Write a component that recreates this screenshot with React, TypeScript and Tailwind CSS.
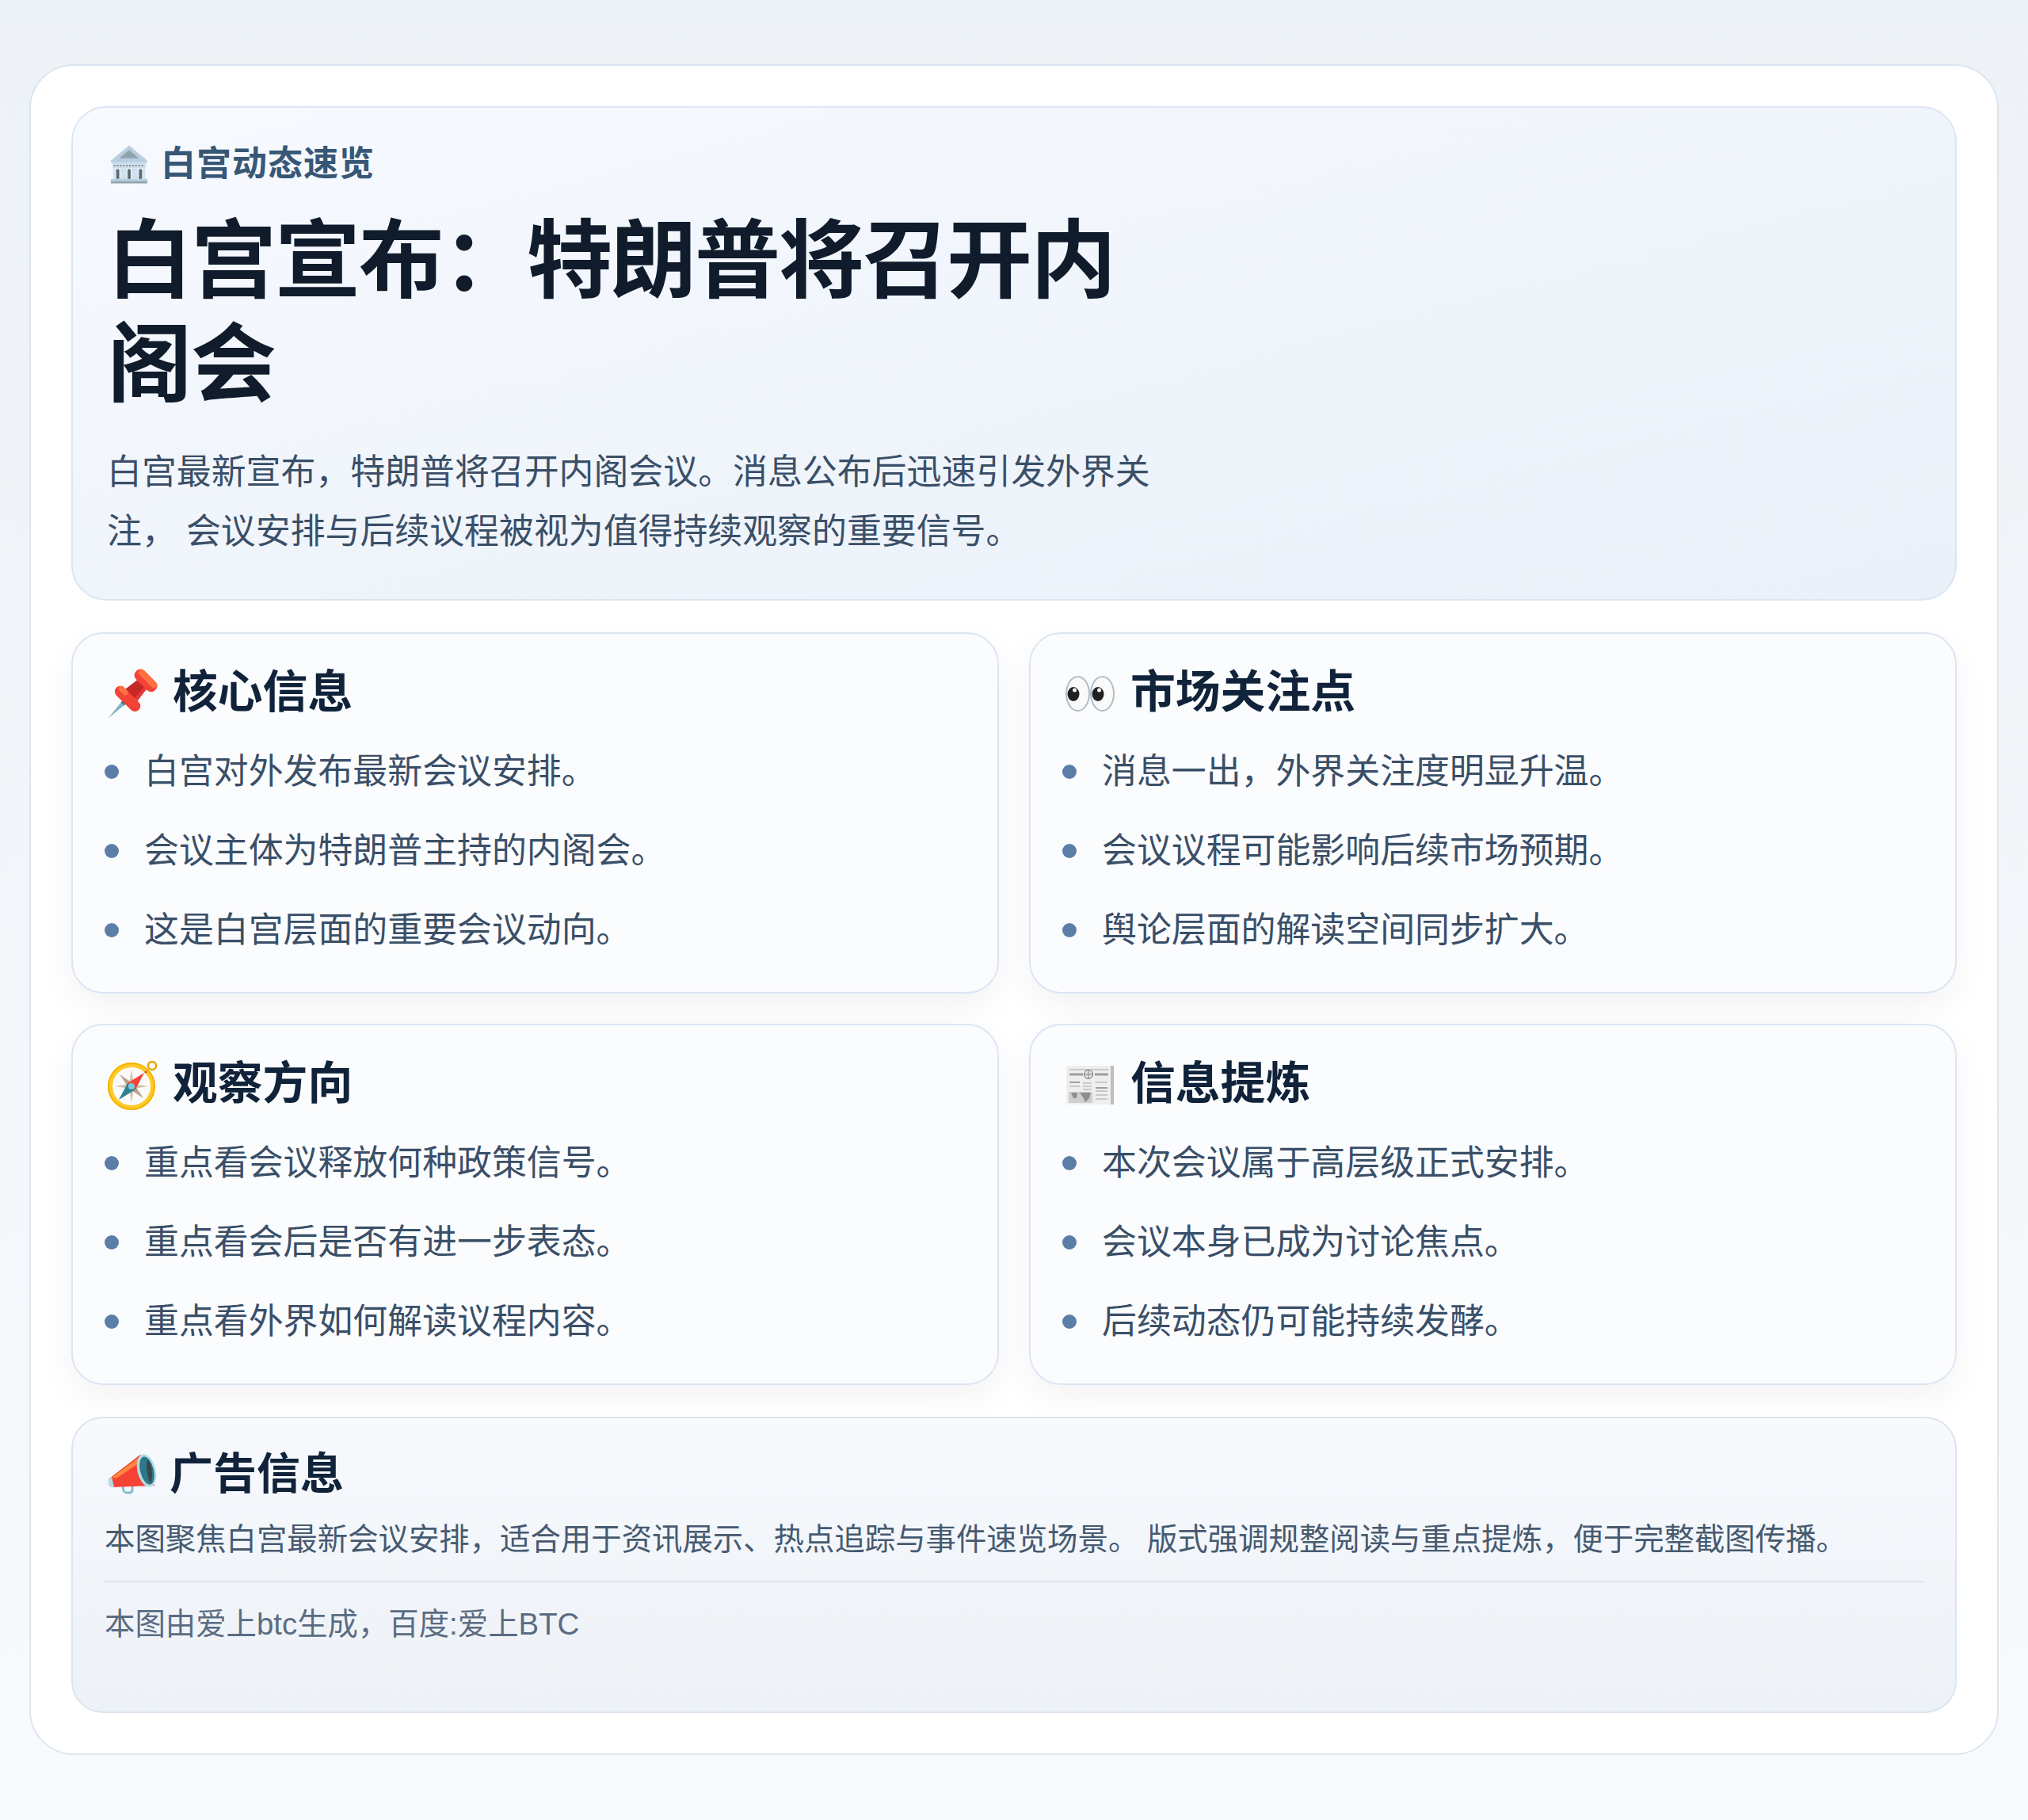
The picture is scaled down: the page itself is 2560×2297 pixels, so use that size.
const font = 'font-["Liberation_Sans","Noto_Sans_CJK_SC",sans-serif]';

function BankIcon() {
  return (
    <svg viewBox="0 0 50 50" className="ml-[4px] h-[49px] w-[48px] shrink-0">
      <path d="M25 0 L49 20 L49 23 L1 23 L1 20 Z" fill="#b9cfe0" />
      <path d="M25 6 L38 17 L12 17 Z" fill="#90a4ae" />
      <rect x="3" y="23" width="44" height="7" fill="#cfdde9" />
      <path d="M5 26.5h40" stroke="#78909c" strokeWidth="2" strokeDasharray="2 2" />
      <rect x="4" y="30" width="42" height="14" fill="#cfe0ee" />
      <rect x="6" y="30" width="8" height="14" fill="#e3ecf4" />
      <rect x="21" y="30" width="8" height="14" fill="#e3ecf4" />
      <rect x="36" y="30" width="8" height="14" fill="#e3ecf4" />
      <rect x="8" y="31" width="4" height="14" rx="2" fill="#5f6b73" />
      <rect x="23" y="31" width="4" height="14" rx="2" fill="#5f6b73" />
      <rect x="38" y="31" width="4" height="14" rx="2" fill="#5f6b73" />
      <rect x="1" y="44" width="48" height="3" fill="#b9cfe0" />
      <rect x="1" y="47" width="48" height="3" fill="#90a4ae" />
    </svg>
  );
}

function PinIcon() {
  return (
    <svg viewBox="0 0 63 63" className="h-[63px] w-[63px] shrink-0">
      <g transform="translate(47 16) rotate(45)">
        <path d="M-3 36 L3 36 L0 66 Z" fill="#84b0c1" />
        <rect x="-3" y="35" width="6" height="5" fill="#2f7889" />
        <path d="M-8 4 L8 4 L11 27 L-11 27 Z" fill="#c62828" />
        <path d="M4 4 L8 4 L11 27 L6 27 Z" fill="#e53935" />
        <rect x="-20" y="24" width="40" height="14" rx="7" fill="#f44336" />
        <rect x="-18" y="24" width="14" height="7" rx="3.5" fill="#ff7043" />
        <rect x="-17" y="-9" width="34" height="15" rx="7" fill="#f44336" />
        <rect x="-15" y="-9" width="30" height="8" rx="4" fill="#ff7043" />
      </g>
    </svg>
  );
}

function EyesIcon() {
  return (
    <svg viewBox="0 0 62 45" className="h-[45px] w-[62px] shrink-0">
      <ellipse cx="15.5" cy="22.5" rx="14.5" ry="21.5" fill="#fafafa" stroke="#b0bec5" strokeWidth="2" />
      <ellipse cx="46.5" cy="22.5" rx="14.5" ry="21.5" fill="#fafafa" stroke="#b0bec5" strokeWidth="2" />
      <ellipse cx="10" cy="23" rx="7.5" ry="9" fill="#212121" />
      <ellipse cx="41" cy="23" rx="7.5" ry="9" fill="#212121" />
      <circle cx="11.5" cy="18" r="2.5" fill="#fafafa" />
      <circle cx="42.5" cy="18" r="2.5" fill="#fafafa" />
    </svg>
  );
}

function CompassIcon() {
  return (
    <svg viewBox="0 0 62 62" className="h-[62px] w-[62px] shrink-0">
      <circle cx="56" cy="6" r="5" fill="none" stroke="#eda600" strokeWidth="2.5" />
      <circle cx="30" cy="32" r="30" fill="#ffca28" />
      <circle cx="30" cy="32" r="29" fill="none" stroke="#f4b400" strokeWidth="2" />
      <circle cx="30" cy="32" r="24" fill="#fafafa" />
      <path d="M30 11 L33 29 L51 32 L33 35 L30 53 L27 35 L9 32 L27 29Z" fill="#d7c4ae" />
      <path d="M15 17 L33 29 L45 47 L27 35Z" fill="#b8a28f" />
      <path d="M46 15 L35 36 L25 28Z" fill="#f44336" />
      <path d="M14 49 L25 28 L35 36Z" fill="#2f8296" />
      <circle cx="30" cy="32" r="4" fill="#79cbdc" />
      <circle cx="48" cy="14" r="1.6" fill="#f44336" />
    </svg>
  );
}

function NewsIcon() {
  return (
    <svg viewBox="0 0 60 49" className="h-[49px] w-[60px] shrink-0">
      <rect x="0" y="0" width="60" height="49" rx="2" fill="#eeeeee" />
      <rect x="56" y="0" width="4" height="49" fill="#bdbdbd" />
      <path d="M4 11h17M36 11h17" stroke="#9e9e9e" strokeWidth="3" />
      <path d="M4 5h49" stroke="#bdbdbd" strokeWidth="1.5" />
      <circle cx="28" cy="11" r="5.5" fill="#e0e0e0" stroke="#757575" strokeWidth="1" />
      <path d="M22.5 11h11M28 5.5v11" stroke="#757575" strokeWidth="0.8" />
      <path d="M4 21h13" stroke="#9e9e9e" strokeWidth="2" />
      <path d="M4 26h13M21 22h11M21 26h11M21 30h11M37 21h15M37 32h15M37 37h15M37 42h15" stroke="#bdbdbd" strokeWidth="1.5" />
      <path d="M37 28h15" stroke="#9e9e9e" strokeWidth="2" />
      <rect x="3" y="33" width="30" height="14" fill="#cfcfcf" />
      <path d="M6 34 L14 34 L13 41 L9 41Z M17 34 L31 34 L29 41 L24 46 L21 40Z" fill="#8f8f8f" />
    </svg>
  );
}

function MegaphoneIcon() {
  return (
    <svg viewBox="0 0 62 52" className="h-[52px] w-[62px] shrink-0">
      <path d="M19 42 L20 47 C21 51 31 51 31 47 L31 42" fill="none" stroke="#84bccb" strokeWidth="3" />
      <path d="M2 32 L41 2 L59 41 L6 43 C2 43 0 37 2 32Z" fill="#f44336" />
      <path d="M5 31 L40 5 L43 10 L12 31Z" fill="#ff8a3d" />
      <path d="M1 33 L5 30 L8 43 L5 43 C2 42 0 37 1 33Z" fill="#b2dde6" />
      <ellipse cx="49" cy="22" rx="11.5" ry="21" transform="rotate(-14 49 22)" fill="#b2dde6" />
      <ellipse cx="49.5" cy="22" rx="8.5" ry="18" transform="rotate(-14 49.5 22)" fill="#2f7889" />
      <path d="M50 8 C56 14 58 28 54 38 C51 32 47 18 50 8Z" fill="#37474f" />
    </svg>
  );
}

const cards = [
  { icon: <PinIcon />, pad: 'pl-[4px]', title: '核心信息', items: ['白宫对外发布最新会议安排。', '会议主体为特朗普主持的内阁会。', '这是白宫层面的重要会议动向。'] },
  { icon: <EyesIcon />, pad: 'pl-[4px]', title: '市场关注点', items: ['消息一出，外界关注度明显升温。', '会议议程可能影响后续市场预期。', '舆论层面的解读空间同步扩大。'] },
  { icon: <CompassIcon />, pad: 'pl-[4px]', title: '观察方向', items: ['重点看会议释放何种政策信号。', '重点看会后是否有进一步表态。', '重点看外界如何解读议程内容。'] },
  { icon: <NewsIcon />, pad: 'pl-[5px]', title: '信息提炼', items: ['本次会议属于高层级正式安排。', '会议本身已成为讨论焦点。', '后续动态仍可能持续发酵。'] },
];

function InfoCard({ icon, pad, title, items }: (typeof cards)[number]) {
  return (
    <div className="h-[456px] rounded-[40px] border-2 border-[#dce6f2] bg-[#fbfcfe] px-[40px] pt-[40px] shadow-[0_16px_44px_rgba(15,23,42,0.05)]">
      <h2 className="flex h-[68px] items-center text-[56.8px] font-bold leading-[68px] text-[#10233a]">
        <span className={`mt-[3px] flex w-[86px] shrink-0 ${pad}`}>{icon}</span>
        <span>{title}</span>
      </h2>
      <ul className="mt-[16px] flex flex-col">
        {items.map((item) => (
          <li key={item} className="flex h-[100px] items-center text-[43.9px] leading-[76px] text-[#3a4f68]">
            <span className="mr-[32px] h-[18px] w-[18px] shrink-0 rounded-full bg-[#5b7ea8]" />
            <span>{item}</span>
          </li>
        ))}
      </ul>
    </div>
  );
}

export default function App() {
  return (
    <div className={`${font} min-h-[2297px] bg-gradient-to-b from-[#edf2f7] to-[#f8fafd] px-[37px] pt-[81px] pb-[82px]`}>
      <div className="flex flex-col rounded-[56px] border-2 border-[#dce6f0] bg-white p-[51px]">
        <section className="h-[624px] rounded-[44px] border-2 border-[#dce6f2] bg-gradient-to-br from-[#f7faff] to-[#e9f0f8] px-[43px] pt-[36px]">
          <div className="flex h-[70px] items-center gap-[16px] text-[44px] font-bold tracking-[1px] text-[#375777]">
            <BankIcon />
            <span>白宫动态速览</span>
          </div>
          <h1 className="mt-[22px] max-w-[1340px] text-[108px] font-bold leading-[131px] tracking-[-2px] text-[#101c2c]">
            白宫宣布：特朗普将召开内阁会
          </h1>
          <p className="mt-[32px] max-w-[1340px] text-[43.9px] leading-[75px] text-[#3a4f68]">
            白宫最新宣布，特朗普将召开内阁会议。消息公布后迅速引发外界关注， 会议安排与后续议程被视为值得持续观察的重要信号。
          </p>
        </section>

        <div className="mt-[40px] grid grid-cols-2 gap-x-[38px] gap-y-[38px]">
          {cards.map((card) => (
            <InfoCard key={card.title} {...card} />
          ))}
        </div>

        <section className="mt-[40px] h-[374px] rounded-[40px] border-2 border-[#dce5ee] bg-gradient-to-b from-[#f7f9fd] to-[#edf2f7] px-[40px] pt-[36px]">
          <h2 className="flex h-[68px] items-center text-[55px] font-bold leading-[68px] text-[#10233a]">
            <span className="flex w-[82px] shrink-0 pl-[4px]">
              <MegaphoneIcon />
            </span>
            <span>广告信息</span>
          </h2>
          <p className="mt-[19px] text-[38.4px] leading-[60px] text-[#475a70]">
            本图聚焦白宫最新会议安排，适合用于资讯展示、热点追踪与事件速览场景。 版式强调规整阅读与重点提炼，便于完整截图传播。
          </p>
          <div className="mt-[22px] border-t-2 border-[#dbe3ee] pt-[23px] text-[38.4px] leading-[60px] text-[#5a6c82]">
            本图由爱上btc生成，百度:爱上BTC
          </div>
        </section>
      </div>
    </div>
  );
}
